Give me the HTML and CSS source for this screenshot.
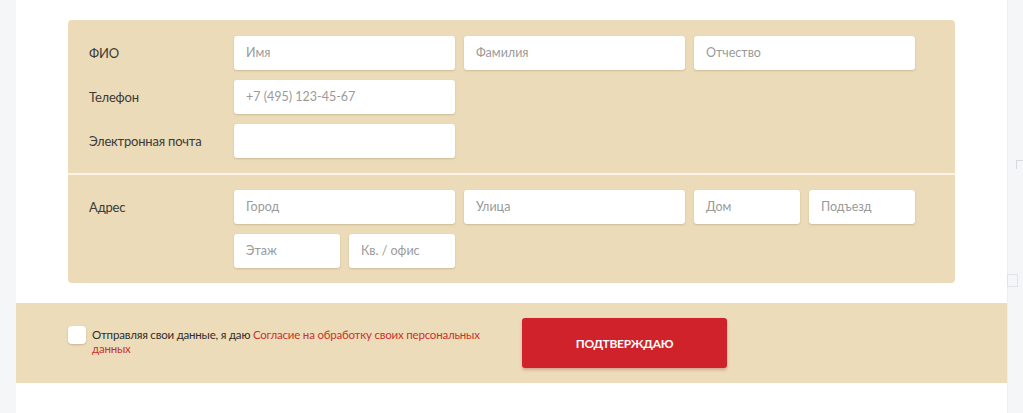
FILE: index.html
```html
<!DOCTYPE html>
<html lang="ru">
<head>
<meta charset="utf-8">
<title>Форма</title>
<link rel="stylesheet" href="styles.css">
</head>
<body>
<div class="page">
  <div class="card">
    <div class="panel">
      <div class="section">
        <div class="row">
          <div class="label">ФИО</div>
          <div class="fields">
            <div class="field w2">Имя</div>
            <div class="field w2">Фамилия</div>
            <div class="field w2">Отчество</div>
          </div>
        </div>
        <div class="row">
          <div class="label">Телефон</div>
          <div class="fields">
            <div class="field w2">+7 (495) 123-45-67</div>
          </div>
        </div>
        <div class="row">
          <div class="label">Электронная почта</div>
          <div class="fields">
            <div class="field w2"></div>
          </div>
        </div>
      </div>
      <div class="section">
        <div class="row">
          <div class="label">Адрес</div>
          <div class="fields">
            <div class="field w2">Город</div>
            <div class="field w2">Улица</div>
            <div class="field">Дом</div>
            <div class="field">Подъезд</div>
            <div class="field">Этаж</div>
            <div class="field">Кв. / офис</div>
          </div>
        </div>
      </div>
    </div>
    <div class="band">
      <div class="consent">
        <span class="check"></span>
        <p class="consent-text">Отправляя свои данные, я даю <a href="#">Согласие на обработку своих персональных данных</a></p>
      </div>
      <button class="submit" type="button">ПОДТВЕРЖДАЮ</button>
    </div>
  </div>
  <div class="side">
    <span class="mark-corner"></span>
    <span class="mark-box"></span>
  </div>
</div>
</body>
</html>
```

FILE: styles.css
```css
html, body {
  margin: 0;
  padding: 0;
  background: #f5f6f8;
  font-family: Lato, "Open Sans", "Liberation Sans", sans-serif;
  color: #3b3a36;
}

.page {
  display: flex;
  height: 413px;
  overflow: hidden;
  padding-left: 16px;
}

.card {
  width: 991px;
  background: #fff;
  padding-top: 20px;
  box-sizing: border-box;
}

.panel {
  margin: 0 52px 0 52px;
  width: 887px;
  background: #ebdbb8;
  border-radius: 4px;
}

.section {
  padding: 16px 0 15px;
}

.section + .section {
  border-top: 2px solid #fbf4e6;
  padding-top: 15px;
}

.row {
  display: flex;
  align-items: flex-start;
}

.row + .row {
  margin-top: 10px;
}

.label {
  width: 145px;
  padding-left: 21px;
  font-size: 13px;
  letter-spacing: -0.2px;
  line-height: 34px;
  color: #3b3a36;
}

.fields {
  display: grid;
  grid-template-columns: repeat(6, 106px);
  column-gap: 9px;
  row-gap: 10px;
}

.field {
  height: 34px;
  line-height: 34px;
  padding-left: 12px;
  background: #fff;
  border-radius: 3px;
  box-shadow: 0 1px 2px rgba(120, 95, 50, 0.25);
  font-size: 12.5px;
  color: #9a9a9a;
  box-sizing: border-box;
}

.field.w2 {
  grid-column: span 2;
}

.band {
  margin-top: 20px;
  height: 80px;
  background: #ecdcba;
  display: flex;
  align-items: center;
  padding-left: 52px;
}

.consent {
  width: 454px;
  display: flex;
  align-items: flex-start;
  gap: 6px;
  margin-top: -5px;
}

.check {
  flex: none;
  width: 18px;
  height: 18px;
  background: #fff;
  border-radius: 4px;
  box-shadow: 0 1px 2px rgba(120, 95, 50, 0.3);
}

.consent-text {
  width: 400px;
  margin: 2px 0 0;
  font-size: 11.5px;
  letter-spacing: -0.2px;
  line-height: 14px;
  color: #2e2d2a;
}

.consent-text a {
  color: #c8332b;
  text-decoration: none;
}

.submit {
  width: 205px;
  height: 50px;
  border: none;
  border-radius: 3px;
  background: #d0222a;
  color: #fff;
  font-family: Lato, "Open Sans", sans-serif;
  font-weight: 700;
  font-size: 12px;
  letter-spacing: -0.3px;
  box-shadow: 0 2px 3px rgba(160, 40, 30, 0.3);
}

.side {
  position: relative;
  flex: 1;
  border-left: 1px solid #eceef1;
}

.mark-corner {
  position: absolute;
  left: 8px;
  top: 160px;
  width: 8px;
  height: 8px;
  border-left: 1px solid #d8d9dc;
  border-top: 1px solid #d8d9dc;
}

.mark-box {
  position: absolute;
  left: -1px;
  top: 274px;
  width: 9px;
  height: 11px;
  border: 1px solid #e1e2e5;
}
```
